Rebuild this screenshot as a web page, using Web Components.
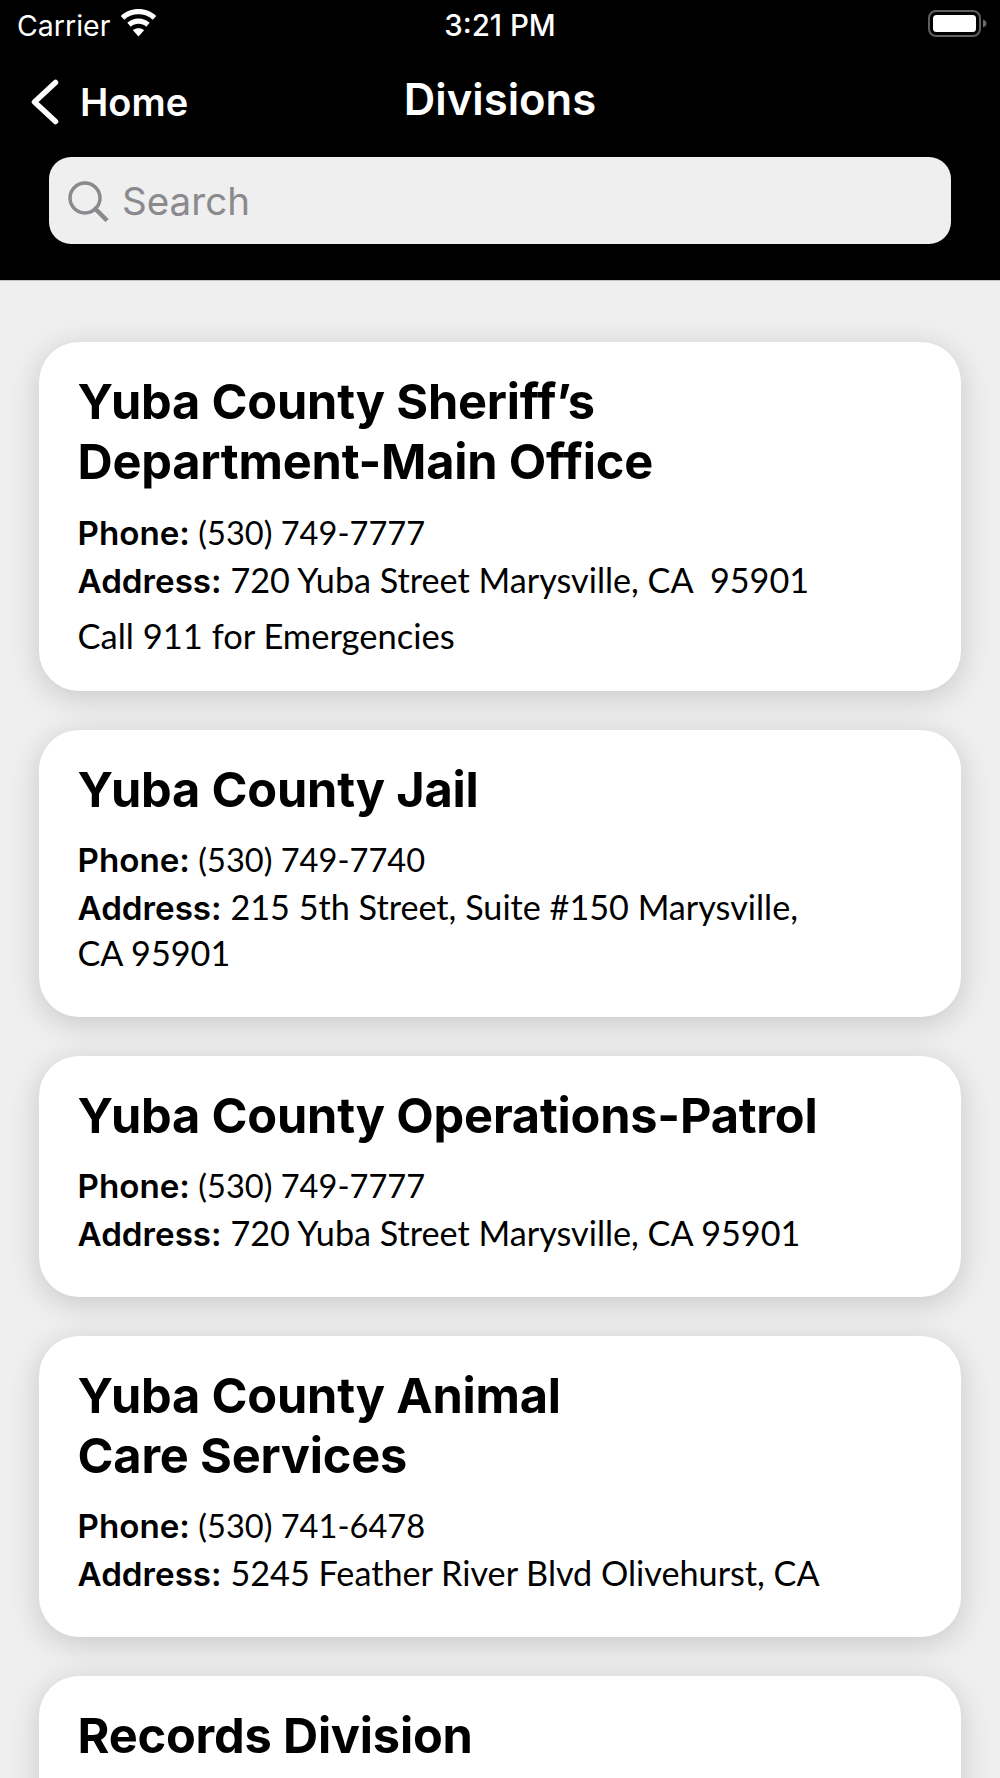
<!DOCTYPE html>
<html><head><meta charset="utf-8">
<style>
html,body{margin:0;padding:0;background:#efefef;height:1778px;overflow:hidden}
body{font-family:"Inter","Liberation Sans",sans-serif}
</style></head><body>
<app-header></app-header>
<main-list>
<div-card title="Yuba County Sheriff’s&#10;Department-Main Office" phone="(530) 749-7777" address="720 Yuba Street Marysville, CA&nbsp;&nbsp;95901" note="Call 911 for Emergencies"></div-card>
<div-card title="Yuba County Jail" phone="(530) 749-7740" address="215 5th Street, Suite #150 Marysville," more="CA 95901"></div-card>
<div-card title="Yuba County Operations-Patrol" phone="(530) 749-7777" address="720 Yuba Street Marysville, CA 95901"></div-card>
<div-card title="Yuba County Animal&#10;Care Services" phone="(530) 741-6478" address="5245 Feather River Blvd Olivehurst, CA"></div-card>
<div-card title="Records Division"></div-card>
</main-list>
<script>
class AppHeader extends HTMLElement{constructor(){super();this.attachShadow({mode:'open'}).innerHTML=`<style>
:host{display:block;background:#000;color:#fff;height:281px;box-sizing:border-box;border-bottom:1px solid #c4c4c4}
.status{height:50px;display:flex;align-items:center;position:relative;padding:0 17px;font:400 28.5px "Inter",sans-serif}
.time{position:absolute;left:0;right:0;text-align:center;font-weight:500;font-size:29.5px}
.wifi{margin-left:10px;margin-top:-5px}
.batt{position:absolute;left:928px;top:10px}
.nav{height:100px;position:relative;display:flex;align-items:center;justify-content:center}
.title{font:600 43.6px "Inter",sans-serif;margin-top:-2px}
.back{position:absolute;left:30px;top:28px;display:flex;align-items:center}
.back span{font:600 38px "Inter",sans-serif;margin-left:21px;margin-top:1px}
.search{margin:7px 49px 0 48.5px;height:87px;background:#efefef;border-radius:22px;display:flex;align-items:center;padding-left:18.5px;color:#8a8a8e;font:400 38.6px "Inter",sans-serif}
.search span{margin-left:13px}
</style>
<div class="status"><span>Carrier</span>
<svg class="wifi" width="37" height="28" viewBox="0 0 37 28"><path fill="#fff" d="M18.5 27.5l-5.6-6.2c3.2-2.6 8-2.6 11.2 0z"/><path fill="#fff" d="M18.5 9.5c4.3 0 8.200 1.600 11.200 4.300l-3.500 3.900c-4.300-3.800-11.100-3.800-15.400 0l-3.500-3.900c3-2.700 6.900-4.300 11.200-4.300z"/><path fill="#fff" d="M18.500 0c6.800 0 13 2.600 17.700 6.900l-3.400 3.800c-8-7.300-20.600-7.300-28.600 0L.8 6.900C5.500 2.600 11.700 0 18.500 0z"/></svg>
<span class="time">3:21 PM</span>
<svg class="batt" width="60" height="28" viewBox="0 0 60 28"><rect x="1" y="1" width="51" height="25" rx="7" fill="none" stroke="#5f5f5f" stroke-width="2"/><rect x="5" y="5" width="43" height="17" rx="3.500" fill="#fff"/><path d="M55 9.500c2 .6 3.500 2.200 3.500 4s-1.500 3.400-3.500 4z" fill="#6a6a6a"/></svg></div>
<div class="nav"><div class="back"><svg width="29" height="46" viewBox="0 0 29 46"><path d="M25.500 3.500L4.500 23l21 19.500" fill="none" stroke="#fff" stroke-width="5.500" stroke-linecap="round" stroke-linejoin="round"/></svg><span>Home</span></div><div class="title">Divisions</div></div>
<div class="search"><svg width="42" height="42" viewBox="0 0 42 42"><circle cx="18" cy="18" r="15" fill="none" stroke="#8a8a8e" stroke-width="3.500"/><path d="M28.500 29l10 10" stroke="#8a8a8e" stroke-width="4.500" stroke-linecap="square"/></svg><span>Search</span></div>`}}
customElements.define('app-header',AppHeader);
class MainList extends HTMLElement{constructor(){super();this.attachShadow({mode:'open'}).innerHTML=`<style>
:host{display:flex;flex-direction:column;gap:39px;padding:61px 39px 0}
</style><slot></slot>`}}
customElements.define('main-list',MainList);
class DivCard extends HTMLElement{constructor(){super();this.attachShadow({mode:'open'})}
connectedCallback(){const g=n=>this.getAttribute(n)||'';
this.shadowRoot.innerHTML=`<style>
:host{display:block;background:#fff;border-radius:40px;box-shadow:0 6px 30px rgba(0,0,0,.17);padding:30px 39px 40.5px 38.5px;color:#000}
:host([note]){padding-bottom:32px}
.t{font:700 48.7px/60px "Inter",sans-serif;white-space:pre-line;letter-spacing:-.2px;margin-bottom:17.5px}
.row,.note,.more{font:400 34.2px/46px "Lato",sans-serif}
.row+.row{margin-top:1px}
.phone{font-size:32.6px}
b{font:600 33.2px "Inter",sans-serif}
.note{margin-top:9px;line-height:47px;font-size:34.5px}
</style><div class="t">${g('title')}</div>${g('phone')?`<div class="row phone"><b>Phone:</b> <span>${g('phone')}</span></div><div class="row"><b>Address:</b> <span>${g('address')}</span></div>`:''}${g('more')?`<div class="more">${g('more')}</div>`:''}${g('note')?`<div class="note">${g('note')}</div>`:''}`}}
customElements.define('div-card',DivCard);
</script></body></html>
